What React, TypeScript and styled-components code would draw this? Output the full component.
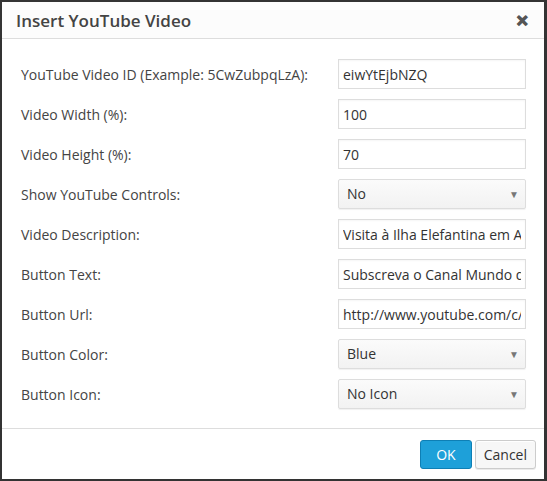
import * as React from "react";
import { createGlobalStyle, styled } from "styled-components";

const GlobalStyle = createGlobalStyle`
    html, body {
        margin: 0;
        padding: 0;
        background: #333;
    }
    * {
        box-sizing: border-box;
    }
`;

interface Field {
    label: string;
    kind: "text" | "select";
    value: string;
}

const fields: Field[] = [
    { label: "YouTube Video ID (Example: 5CwZubpqLzA):", kind: "text", value: "eiwYtEjbNZQ" },
    { label: "Video Width (%):", kind: "text", value: "100" },
    { label: "Video Height (%):", kind: "text", value: "70" },
    { label: "Show YouTube Controls:", kind: "select", value: "No" },
    { label: "Video Description:", kind: "text", value: "Visita à Ilha Elefantina em Assuão" },
    { label: "Button Text:", kind: "text", value: "Subscreva o Canal Mundo de Viagens" },
    { label: "Button Url:", kind: "text", value: "http://www.youtube.com/c/MundoDeViagens" },
    { label: "Button Color:", kind: "select", value: "Blue" },
    { label: "Button Icon:", kind: "select", value: "No Icon" },
];

export default function App() {
    return (
        <>
            <GlobalStyle />
            <Dialog>
                <Header>
                    <Title>Insert YouTube Video</Title>
                    <Close>✕</Close>
                </Header>
                <Body>
                    {fields.map((field) => (
                        <Row key={field.label}>
                            <Label>{field.label}</Label>
                            {field.kind === "text" ? (
                                <TextBox readOnly value={field.value} />
                            ) : (
                                <SelectBox>
                                    {field.value}
                                    <Arrow>▼</Arrow>
                                </SelectBox>
                            )}
                        </Row>
                    ))}
                </Body>
                <Footer>
                    <Button $primary>OK</Button>
                    <Button>Cancel</Button>
                </Footer>
            </Dialog>
        </>
    );
}

const Dialog = styled.div`
    width: 547px;
    height: 481px;
    border-style: solid;
    border-color: #333;
    border-width: 2px 3px 2px 2px;
    background: #fff;
    display: flex;
    flex-direction: column;
    font-family: "Open Sans", "Liberation Sans", sans-serif;
    color: #444;
`;

const Header = styled.div`
    height: 37px;
    flex: none;
    display: flex;
    align-items: center;
    justify-content: space-between;
    padding: 0 14px 0 14px;
    background: #fcfcfc;
    border-bottom: 1px solid #ddd;
`;

const Title = styled.h1`
    margin: 0;
    font-size: 17px;
    font-weight: 600;
    color: #444;
`;

const Close = styled.span`
    font-size: 15px;
    font-weight: 700;
    color: #555;
    margin-right: 1px;
    -webkit-text-stroke: 1.2px #555;
`;

const Body = styled.div`
    flex: 1;
    display: flex;
    flex-direction: column;
    gap: 10px;
    padding: 20px 18px 0 19px;
    border-bottom: 1px solid #ddd;
`;

const Row = styled.div`
    display: flex;
    align-items: center;
    justify-content: space-between;
    height: 30px;
`;

const Label = styled.span`
    font-size: 14px;
    color: #444;
`;

const TextBox = styled.input`
    width: 188px;
    height: 30px;
    margin: 0;
    padding: 0 4px;
    border: 1px solid #ddd;
    border-radius: 0;
    outline: none;
    background: #fff;
    box-shadow: inset 0 1px 2px rgba(0, 0, 0, 0.04);
    font-family: "Open Sans", "Liberation Sans", sans-serif;
    font-size: 14px;
    color: #333;
`;

const SelectBox = styled.div`
    position: relative;
    width: 188px;
    height: 30px;
    padding: 0 8px;
    border: 1px solid #ddd;
    border-radius: 2px;
    background: linear-gradient(#fbfbfb, #f2f2f2);
    box-shadow: 0 1px 1px rgba(0, 0, 0, 0.06);
    font-size: 14px;
    line-height: 28px;
    color: #333;
`;

const Arrow = styled.span`
    position: absolute;
    right: 6px;
    top: 0;
    font-size: 10px;
    color: #777;
`;

const Footer = styled.div`
    height: 50px;
    flex: none;
    display: flex;
    justify-content: flex-end;
    align-items: center;
    gap: 3px;
    padding: 0 8px 0 0;
`;

const Button = styled.button<{ $primary?: boolean }>`
    height: 29px;
    padding: 0 ${(p) => (p.$primary ? "15px" : "8px")};
    border: 1px solid ${(p) => (p.$primary ? "#0e7fb5" : "#ccc")};
    border-radius: 3px;
    background: ${(p) => (p.$primary ? "#1ea0d9" : "#f7f7f7")};
    color: ${(p) => (p.$primary ? "#fff" : "#333")};
    box-shadow: ${(p) => (p.$primary ? "none" : "inset 0 1px 0 #fff, 0 1px 0 rgba(0,0,0,0.08)")};
    font-family: "Open Sans", "Liberation Sans", sans-serif;
    font-size: 14px;
`;
